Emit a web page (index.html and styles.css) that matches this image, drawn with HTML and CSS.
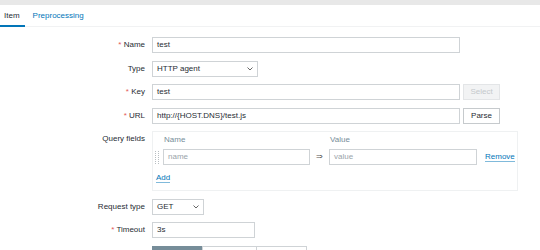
FILE: index.html
```html
<!DOCTYPE html>
<html>
<head>
<meta charset="utf-8">
<link rel="stylesheet" href="styles.css">
</head>
<body>
<div class="topbar"></div>
<div class="tabs">
  <div class="tab active">Item</div>
  <div class="tab link">Preprocessing</div>
</div>
<div class="form">
  <div class="label"><span class="ast">*</span> Name</div>
  <div class="ctrl"><div class="input w308">test</div></div>

  <div class="label">Type</div>
  <div class="ctrl"><div class="select w106">HTTP agent<svg class="chev" width="6" height="4" viewBox="0 0 6 4"><path d="M0.5 0.5 L3 3 L5.5 0.5" fill="none" stroke="#555" stroke-width="0.9"/></svg></div></div>

  <div class="label"><span class="ast">*</span> Key</div>
  <div class="ctrl"><div class="input w308">test</div><div class="btn disabled">Select</div></div>

  <div class="label"><span class="ast">*</span> URL</div>
  <div class="ctrl"><div class="input w308">http://{HOST.DNS}/test.js</div><div class="btn">Parse</div></div>

  <div class="label top">Query fields</div>
  <div class="ctrl">
    <div class="qbox">
      <div class="qhead">
        <div></div>
        <div class="hcell">Name</div>
        <div></div>
        <div class="hcell">Value</div>
        <div></div>
      </div>
      <div class="qrow">
        <div class="drag"><svg width="5" height="15" viewBox="0 0 5 15"><g fill="#b8bec2"><rect x="0" y="1" width="1" height="1"/><rect x="3" y="1" width="1" height="1"/><rect x="0" y="3" width="1" height="1"/><rect x="3" y="3" width="1" height="1"/><rect x="0" y="5" width="1" height="1"/><rect x="3" y="5" width="1" height="1"/><rect x="0" y="7" width="1" height="1"/><rect x="3" y="7" width="1" height="1"/><rect x="0" y="9" width="1" height="1"/><rect x="3" y="9" width="1" height="1"/><rect x="0" y="11" width="1" height="1"/><rect x="3" y="11" width="1" height="1"/><rect x="0" y="13" width="1" height="1"/><rect x="3" y="13" width="1" height="1"/></g></svg></div>
        <div class="input ph">name</div>
        <div class="arrow">&rArr;</div>
        <div class="input ph">value</div>
        <div class="rm"><span class="lnk">Remove</span></div>
      </div>
      <div class="qadd"><span class="lnk">Add</span></div>
    </div>
  </div>

  <div class="label">Request type</div>
  <div class="ctrl"><div class="select w52">GET<svg class="chev" width="6" height="4" viewBox="0 0 6 4"><path d="M0.5 0.5 L3 3 L5.5 0.5" fill="none" stroke="#555" stroke-width="0.9"/></svg></div></div>

  <div class="label"><span class="ast">*</span> Timeout</div>
  <div class="ctrl"><div class="input w103">3s</div></div>

  <div class="label"></div>
  <div class="ctrl">
    <div class="seg">
      <div class="segi on"></div>
      <div class="segi w54"></div>
      <div class="segi"></div>
    </div>
  </div>
</div>
</body>
</html>
```
FILE: styles.css
```css
html, body {
  margin: 0;
  padding: 0;
  background: #fff;
}
body {
  font-family: "Liberation Sans", Arial, sans-serif;
  font-size: 8px;
  color: #1f2c33;
  overflow: hidden;
}
.topbar {
  height: 5px;
  background: #e8e8e8;
}
.tabs {
  display: flex;
  gap: 4px;
  border-bottom: 1px solid #f1f2f3;
}
.tab {
  padding: 2px 5px 0 4px;
  line-height: 18px;
  border-bottom: 2px solid transparent;
  margin-bottom: -1px;
}
.tab.active {
  border-bottom-color: #0275b8;
  color: #1f2c33;
}
.tab.link {
  color: #0275b8;
}
.form {
  display: grid;
  grid-template-columns: 145px 1fr;
  column-gap: 7px;
  row-gap: 7.5px;
  padding-top: 10px;
}
.label {
  text-align: right;
  line-height: 16px;
  color: #1f2c33;
  white-space: nowrap;
}
.ast {
  color: #e45959;
}
.ctrl {
  display: flex;
  gap: 3px;
  align-items: flex-start;
}
.input, .select {
  box-sizing: border-box;
  height: 16px;
  line-height: 14px;
  border: 1px solid #cfd3d6;
  background: #fff;
  padding: 0 4px;
  white-space: nowrap;
  overflow: hidden;
}
.select {
  position: relative;
}
.chev {
  position: absolute;
  right: 4px;
  top: 5px;
}
.w308 { width: 308px; }
.w106 { width: 106px; }
.w52 { width: 52px; }
.w103 { width: 103px; }
.btn {
  box-sizing: border-box;
  width: 37px;
  height: 16px;
  line-height: 14px;
  border: 1px solid #c6cacd;
  background: #fff;
  text-align: center;
  color: #1f2c33;
}
.btn.disabled {
  background: #f2f3f4;
  border-color: #e3e5e7;
  color: #c5c9cc;
}
.qbox {
  box-sizing: border-box;
  width: 366px;
  border: 1px solid #eff1f2;
  padding-bottom: 4px;
}
.qhead, .qrow {
  display: grid;
  grid-template-columns: 10px 147px 19px 148px 1fr;
}
.qhead {
  line-height: 16px;
  color: #768d99;
  margin-bottom: 1px;
}
.hcell {
  padding-left: 1px;
}
.drag {
  padding-left: 2px;
  padding-top: 1px;
}
.drag svg { display: block; }
.ph {
  color: #9aa4aa;
}
.arrow {
  text-align: center;
  line-height: 16px;
  color: #555;
}
.rm {
  padding-left: 8px;
  line-height: 16px;
}
.lnk {
  color: #0275b8;
  border-bottom: 1px solid rgba(2, 117, 184, 0.5);
}
.qadd {
  margin-top: 5px;
  padding-left: 3px;
  line-height: 16px;
}
.seg {
  display: flex;
}
.segi {
  box-sizing: border-box;
  width: 51px;
  height: 16px;
  border: 1px solid #cfd3d6;
  margin-left: -1px;
  background: #fff;
}
.segi:first-child { margin-left: 0; }
.segi.w54 { width: 55px; }
.segi.on {
  background: #768d99;
  border-color: #768d99;
}
```
